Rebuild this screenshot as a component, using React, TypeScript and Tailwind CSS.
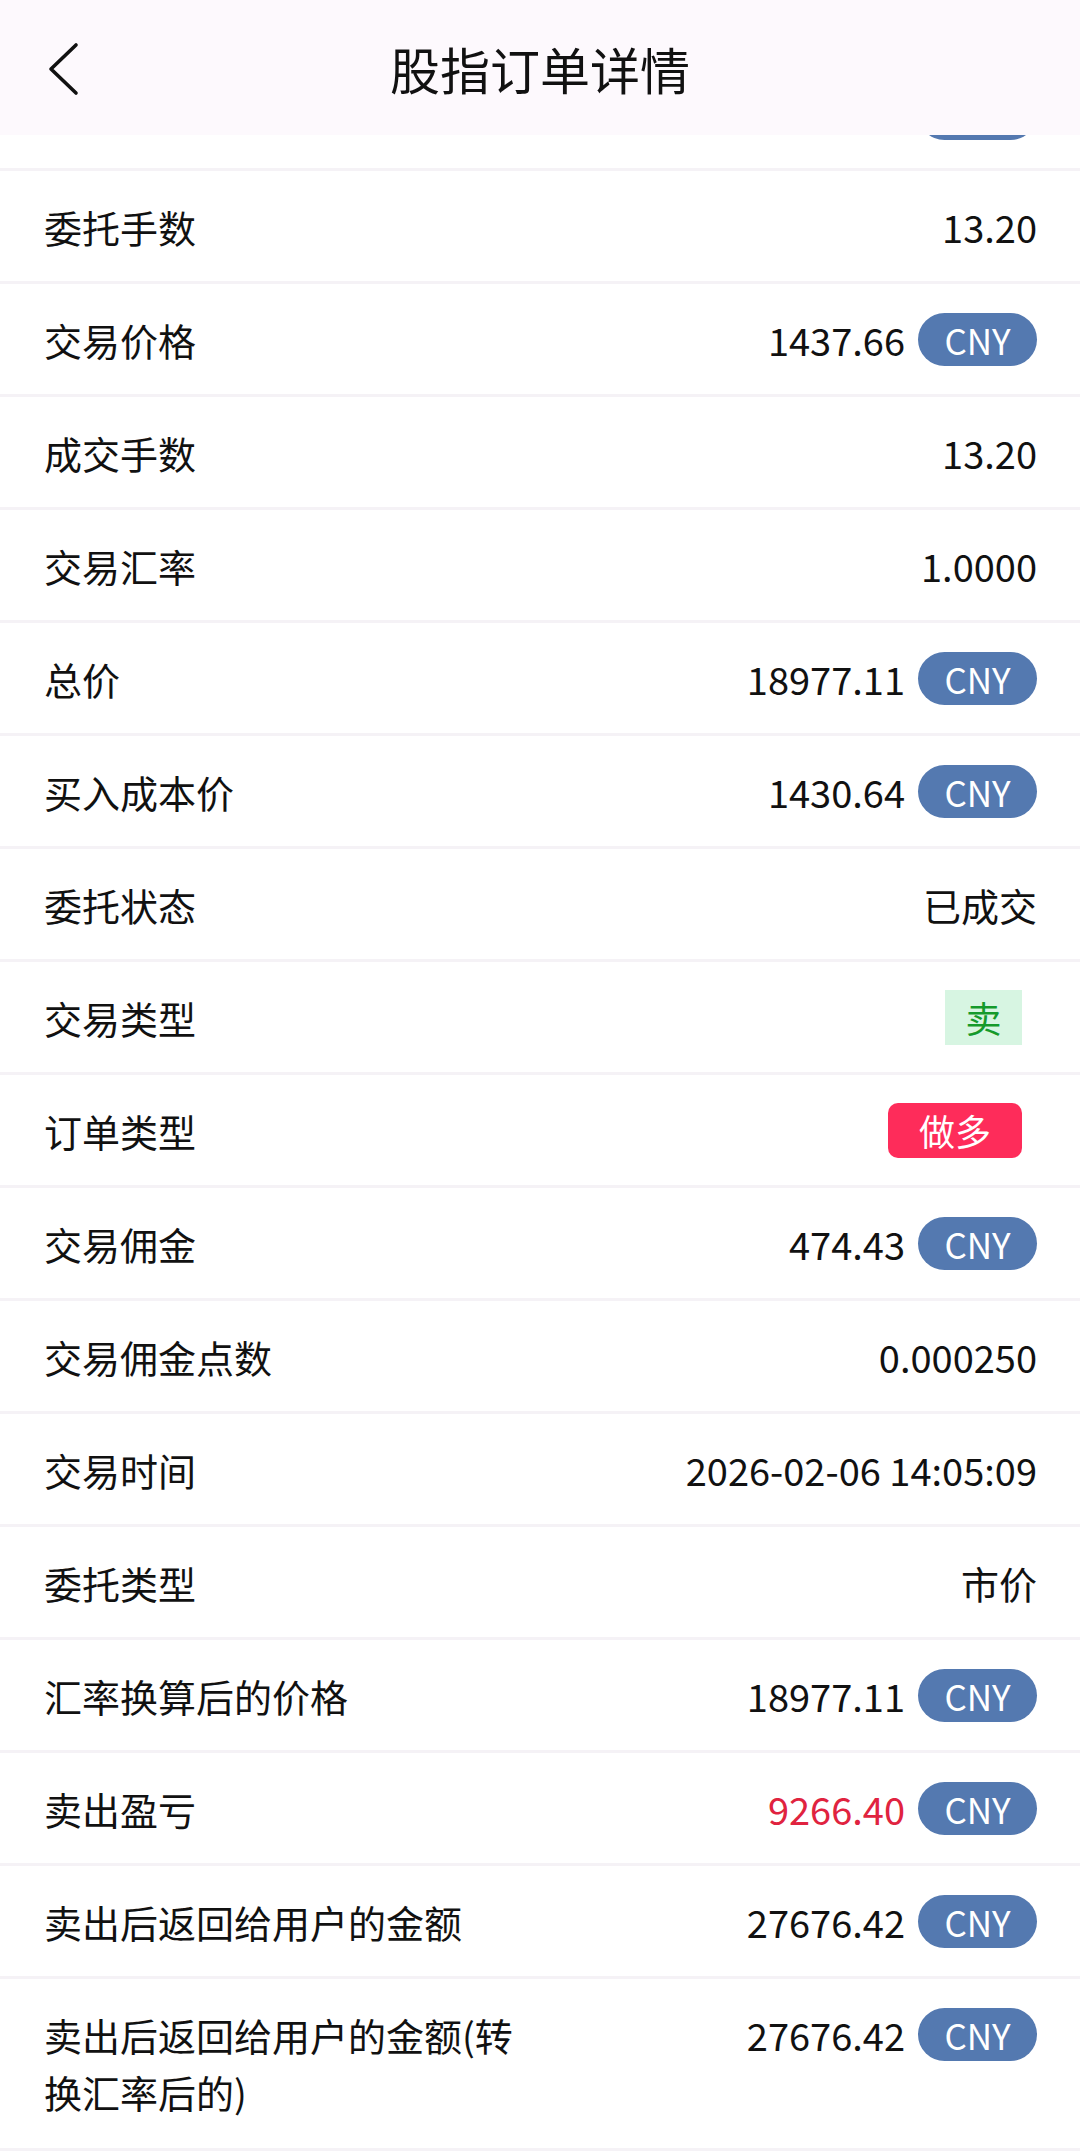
import React from "react"

type Row = {
  label: string
  value?: string
  cny?: boolean
  red?: boolean
  tag?: "sell" | "long"
}

const rows: Row[] = [
  { label: "委托手数", value: "13.20" },
  { label: "交易价格", value: "1437.66", cny: true },
  { label: "成交手数", value: "13.20" },
  { label: "交易汇率", value: "1.0000" },
  { label: "总价", value: "18977.11", cny: true },
  { label: "买入成本价", value: "1430.64", cny: true },
  { label: "委托状态", value: "已成交" },
  { label: "交易类型", tag: "sell" },
  { label: "订单类型", tag: "long" },
  { label: "交易佣金", value: "474.43", cny: true },
  { label: "交易佣金点数", value: "0.000250" },
  { label: "交易时间", value: "2026-02-06 14:05:09" },
  { label: "委托类型", value: "市价" },
  { label: "汇率换算后的价格", value: "18977.11", cny: true },
  { label: "卖出盈亏", value: "9266.40", cny: true, red: true },
  { label: "卖出后返回给用户的金额", value: "27676.42", cny: true },
]

function CnyBadge() {
  return (
    <span className="ml-[13px] flex h-[53px] w-[119px] items-center justify-center rounded-full bg-[#5479b0] text-[35px] leading-none text-white">
      CNY
    </span>
  )
}

function Value({ row }: { row: Row }) {
  if (row.tag === "sell") {
    return (
      <span className="mr-[15px] flex h-[55px] w-[77px] items-center justify-center bg-[#d7f5e2] text-[36px] leading-none text-[#159a2b]">
        卖
      </span>
    )
  }
  if (row.tag === "long") {
    return (
      <span className="mr-[15px] flex h-[55px] w-[134px] items-center justify-center rounded-[10px] bg-[#fe2c5a] text-[36px] leading-none text-white">
        做多
      </span>
    )
  }
  return (
    <div className="flex h-[57px] items-center">
      <span className={row.red ? "text-[#e0233f]" : "text-[#111]"}>{row.value}</span>
      {row.cny && <CnyBadge />}
    </div>
  )
}

export default function App() {
  return (
    <div
      className="min-h-[2152px] w-[1080px] bg-white text-[38px] leading-[57px] text-[#111]"
      style={{ fontFamily: '"Noto Sans CJK SC", "Noto Sans", sans-serif' }}
    >
      {/* Header */}
      <header className="relative z-10 grid h-[135px] grid-cols-[1fr_auto_1fr] items-center bg-[#fdf9fd]">
        <div className="pl-[45px] pt-[2px]">
          <svg width="34" height="54" viewBox="0 0 34 54" fill="none">
            <path d="M31 3 L6 27 L31 51" stroke="#111" strokeWidth="3.6" strokeLinecap="round" strokeLinejoin="round" />
          </svg>
        </div>
        <h1 className="text-[50px] font-normal leading-none">股指订单详情</h1>
        <div />
      </header>

      {/* Row scrolled under the header: only the bottom of its badge shows */}
      <div className="h-[36px] overflow-hidden border-b-[3px] border-[#f5f2f6]">
        <div className="-mt-[77px] flex h-[110px] items-center justify-end px-[43px]">
          <span className="h-[53px] w-[119px] rounded-full bg-[#5479b0]" />
        </div>
      </div>

      {rows.map((row) => (
        <div
          key={row.label}
          className="flex h-[113px] items-center justify-between border-b-[3px] border-[#f5f2f6] pl-[44px] pr-[43px]"
        >
          <span>{row.label}</span>
          <Value row={row} />
        </div>
      ))}

      <div className="flex h-[172px] items-start justify-between border-b-[3px] border-[#f5f2f6] pl-[44px] pr-[43px] pt-[27px]">
        <span className="w-[490px]">卖出后返回给用户的金额(转换汇率后的)</span>
        <Value row={{ label: "", value: "27676.42", cny: true }} />
      </div>
    </div>
  )
}
